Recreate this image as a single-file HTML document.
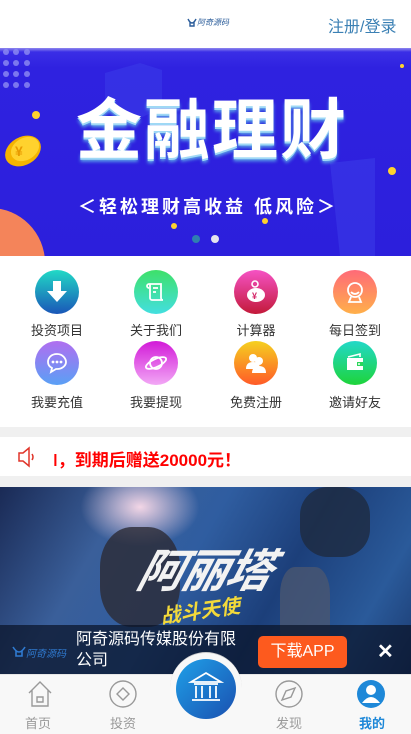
<!DOCTYPE html>
<html><head><meta charset="utf-8"><style>
*{margin:0;padding:0;box-sizing:border-box}
body{width:411px;height:734px;overflow:hidden;background:#fff;font-family:"Liberation Sans","Noto Sans CJK SC",sans-serif;position:relative}
.abs{position:absolute}
.hdr{left:0;top:0;width:411px;height:48px;background:#fff}
.banner{left:0;top:48px;width:411px;height:208px;background:linear-gradient(180deg,#8f87ee 0,#3a2ee6 4px,#2f22e0 20px,#2c1fdc 100%);overflow:hidden}
.ic{width:44px;height:44px;border-radius:50%}
.lbl{font-size:13px;color:#333;width:100px;text-align:center}
</style></head><body>
<div class="abs hdr">
 <svg class="abs" style="left:187px;top:18px" width="10" height="9"><path d="M1 1q2 4 4 4t4-4M3 4v4h4V4" fill="none" stroke="#2a5c9a" stroke-width="1.4"/></svg>
 <div class="abs" style="left:197px;top:17px;font-size:8px;color:#2a5c9a;font-style:italic">阿奇源码</div>
 <div class="abs" style="left:328px;top:13px;font-size:16px;color:#3b80b4">注册/登录</div>
</div>
<div class="abs banner">
 <svg class="abs" style="left:0;top:0" width="411" height="208">
  <g fill="#8e8cf3" opacity=".8">
   <circle cx="6" cy="4" r="3"/><circle cx="16" cy="4" r="3"/><circle cx="27" cy="4" r="3"/>
   <circle cx="6" cy="15" r="3"/><circle cx="16" cy="15" r="3"/><circle cx="27" cy="15" r="3"/>
   <circle cx="6" cy="26" r="3"/><circle cx="16" cy="26" r="3"/><circle cx="27" cy="26" r="3"/>
   <circle cx="6" cy="37" r="3"/><circle cx="16" cy="37" r="3"/><circle cx="27" cy="37" r="3"/>
  </g>
  <polygon points="105,25 140,15 162,22 162,60 140,70 105,60" fill="#3b3ae8" opacity=".6"/>
  <polygon points="330,115 375,110 375,208 340,208" fill="#3a3ae8" opacity=".6"/>
  <circle cx="-10" cy="215" r="55" fill="#f4845a"/>
  <ellipse cx="23" cy="103" rx="19" ry="14" fill="#f5b400" transform="rotate(-30 23 103)"/>
  <ellipse cx="25" cy="101" rx="15" ry="11" fill="#ffd22e" transform="rotate(-30 25 101)"/>
  <text x="15" y="108" font-size="14" fill="#e89a00" font-weight="bold">¥</text>
  <circle cx="36" cy="67" r="4" fill="#ffd22e"/><circle cx="392" cy="123" r="4" fill="#ffd22e"/>
  <circle cx="174" cy="178" r="3" fill="#ffd22e"/><circle cx="265" cy="173" r="3" fill="#ffd22e"/>
  <circle cx="402" cy="18" r="2" fill="#ffd22e"/>
  <circle cx="196" cy="191" r="4" fill="#2f7fb0"/><circle cx="215" cy="191" r="4" fill="#e5e5ee"/>
 </svg>
 <div class="abs" style="left:76px;top:42px;font-size:66px;font-weight:bold;color:#fff;letter-spacing:2px;text-shadow:0 2px 0 #9fd8f5,0 4px 3px #5aa0e8;line-height:80px">金融理财</div>
 <div class="abs" style="left:78px;top:145px;font-size:18px;font-weight:bold;color:#fff;letter-spacing:3px;white-space:nowrap">＜轻松理财高收益 低风险＞</div>
</div>

<div class="abs ic" style="left:35px;top:270px;background:linear-gradient(#21d9c6,#1a56b8)"></div>
<svg class="abs" style="left:45px;top:279px" width="24" height="26"><path d="M8 2h8v10h6L12 23 2 12h6z" fill="#fff"/></svg>
<div class="abs ic" style="left:134px;top:270px;background:linear-gradient(#3ee06a,#43dfe0)"></div>
<svg class="abs" style="left:144px;top:280px" width="24" height="24" fill="none" stroke="#fff" stroke-width="1.8"><path d="M5 4h12v14a2 2 0 0 0 2 2H8a2 2 0 0 1-2-2V4M5 4a2 2 0 0 0 0 4M9 8h5M9 12h3"/></svg>
<div class="abs ic" style="left:234px;top:270px;background:linear-gradient(#f552c4,#c31a3a)"></div>
<svg class="abs" style="left:242px;top:278px" width="28" height="28"><circle cx="13" cy="6" r="3" fill="none" stroke="#fff" stroke-width="1.6"/><ellipse cx="14" cy="17" rx="9" ry="7" fill="#fff"/><text x="10" y="21" font-size="9" fill="#d42a6a" font-weight="bold">¥</text></svg>
<div class="abs ic" style="left:333px;top:270px;background:linear-gradient(#ff6a78,#ffb04a)"></div>
<svg class="abs" style="left:343px;top:280px" width="24" height="26" fill="none" stroke="#fff" stroke-width="1.8"><circle cx="12" cy="10" r="7"/><path d="M8 12q4 4 8 0M8 17l-2 5h12l-2-5"/></svg>

<div class="abs lbl" style="left:7px;top:320px">投资项目</div>
<div class="abs lbl" style="left:106px;top:320px">关于我们</div>
<div class="abs lbl" style="left:206px;top:320px">计算器</div>
<div class="abs lbl" style="left:305px;top:320px">每日签到</div>

<div class="abs ic" style="left:35px;top:341px;background:linear-gradient(#b06ef0,#5aa0f5)"></div>
<svg class="abs" style="left:45px;top:351px" width="24" height="24"><path d="M12 3C6 3 3 7 3 11c0 3 2 5 4 6l-1 4 5-3h1c6 0 9-4 9-7s-3-8-9-8z" fill="none" stroke="#fff" stroke-width="1.8"/><circle cx="8" cy="11" r="1.4" fill="#fff"/><circle cx="12" cy="11" r="1.4" fill="#fff"/><circle cx="16" cy="11" r="1.4" fill="#fff"/></svg>
<div class="abs ic" style="left:134px;top:341px;background:linear-gradient(#d21ad8,#f2a8f5)"></div>
<svg class="abs" style="left:143px;top:350px" width="26" height="26" fill="none" stroke="#fff" stroke-width="1.8"><circle cx="13" cy="13" r="6"/><ellipse cx="13" cy="13" rx="11" ry="4" transform="rotate(-25 13 13)"/></svg>
<div class="abs ic" style="left:234px;top:341px;background:linear-gradient(#f5d020,#ff5a28)"></div>
<svg class="abs" style="left:243px;top:350px" width="26" height="26" fill="#fff"><circle cx="10" cy="8" r="4"/><path d="M3 19q0-7 7-7t7 7z"/><circle cx="16" cy="11" r="4"/><path d="M9 23q0-7 7-7t7 7z"/></svg>
<div class="abs ic" style="left:333px;top:341px;background:linear-gradient(#22d8c8,#1ed43a)"></div>
<svg class="abs" style="left:343px;top:351px" width="24" height="24"><path d="M4 7h16v12H4z" fill="#fff"/><path d="M5 6l12-3v3" fill="none" stroke="#fff" stroke-width="1.6"/><rect x="14" y="11" width="6" height="4" fill="#2bd65a"/><circle cx="16" cy="13" r="1" fill="#fff"/></svg>

<div class="abs lbl" style="left:7px;top:392px">我要充值</div>
<div class="abs lbl" style="left:106px;top:392px">我要提现</div>
<div class="abs lbl" style="left:206px;top:392px">免费注册</div>
<div class="abs lbl" style="left:305px;top:392px">邀请好友</div>

<div class="abs" style="left:0;top:427px;width:411px;height:10px;background:#f0f0f0"></div>
<svg class="abs" style="left:17px;top:446px" width="20" height="22" fill="none" stroke="#e0352a" stroke-width="1.5"><path d="M2 7h4l6-5v18l-6-5H2z M15 8q2 3 0 6"/></svg>
<div class="abs" style="left:53px;top:446px;font-size:17px;font-weight:bold;color:#f00;white-space:nowrap">ǀ，到期后赠送20000元！</div>
<div class="abs" style="left:0;top:476px;width:411px;height:11px;background:#f0f0f0"></div>

<div class="abs" style="left:0;top:487px;width:411px;height:187px;overflow:hidden;background:linear-gradient(120deg,#1a2a55 0%,#3a5f9a 25%,#2f5da0 45%,#1c3f7a 65%,#2a5a9a 85%,#1b3a70 100%)">
 <div class="abs" style="left:80px;top:-20px;width:120px;height:80px;border-radius:50%;background:radial-gradient(#f3d6e6,rgba(200,150,200,0) 70%)"></div>
 <div class="abs" style="left:100px;top:40px;width:80px;height:100px;background:#2c2a35;border-radius:40%;opacity:.8"></div>
 <div class="abs" style="left:300px;top:0;width:70px;height:70px;background:#1e2a40;border-radius:40%;opacity:.8"></div>
 <div class="abs" style="left:280px;top:80px;width:50px;height:90px;background:#4a5670;border-radius:30%;opacity:.8"></div>
 <div class="abs" style="left:140px;top:48px;font-size:46px;font-style:italic;color:#f2f2f2;font-weight:bold;transform:skewX(-15deg);letter-spacing:-2px">阿丽塔</div>
 <div class="abs" style="left:160px;top:108px;font-size:20px;font-style:italic;color:#f3d93a;font-weight:bold;transform:rotate(-8deg)">战斗天使</div>
 <div class="abs" style="left:0;top:138px;width:411px;height:49px;background:rgba(10,20,40,.72)"></div>
 <svg class="abs" style="left:12px;top:159px" width="14" height="12"><path d="M1 1q3 5 6 5t6-5M4 5v5h6V5" fill="none" stroke="#2f7ad0" stroke-width="1.6"/></svg>
 <div class="abs" style="left:26px;top:158px;font-size:10px;color:#2f7ad0;font-style:italic">阿奇源码</div>
 <div class="abs" style="left:76px;top:142px;font-size:16px;color:#fff;line-height:21px;width:170px">阿奇源码传媒股份有限公司</div>
 <div class="abs" style="left:258px;top:149px;width:89px;height:32px;border-radius:5px;background:#fd5a1e;color:#fff;font-size:16px;text-align:center;line-height:32px">下载APP</div>
 <div class="abs" style="left:377px;top:152px;font-size:20px;color:#fff;font-weight:bold">✕</div>
</div>

<div class="abs" style="left:0;top:674px;width:411px;height:60px;background:#f8f8f8;border-top:1px solid #e6e6e6"></div>
<div class="abs" style="left:170px;top:652px;width:72px;height:72px;border-radius:50%;background:#f8f8f8;border-top:1px solid #ccc"></div>
<div class="abs" style="left:176px;top:659px;width:60px;height:60px;border-radius:50%;background:linear-gradient(135deg,#1fa0e8,#1a50b0)"></div>
<svg class="abs" style="left:188px;top:670px" width="36" height="36" fill="none" stroke="#fff" stroke-width="1.8"><path d="M3 12L18 3l15 9zM6 14h24M8 16v12M14 16v12M22 16v12M28 16v12M4 30h28"/></svg>
<svg class="abs" style="left:26px;top:680px" width="28" height="28" fill="none" stroke="#999" stroke-width="1.4"><path d="M3 13L14 2l11 11M6 10v16h16V10M11 17h6v5h-6z"/></svg>
<div class="abs" style="left:25px;top:713px;font-size:13px;color:#999">首页</div>
<svg class="abs" style="left:108px;top:680px" width="30" height="30" fill="none" stroke="#999" stroke-width="1.4"><circle cx="15" cy="14" r="13"/><path d="M15 8l6 6-6 6-6-6z"/></svg>
<div class="abs" style="left:110px;top:713px;font-size:13px;color:#999">投资</div>
<svg class="abs" style="left:274px;top:680px" width="30" height="30" fill="none" stroke="#999" stroke-width="1.4"><circle cx="15" cy="14" r="13"/><path d="M21 8l-9 3-4 9 9-3z"/></svg>
<div class="abs" style="left:276px;top:713px;font-size:13px;color:#999">发现</div>
<svg class="abs" style="left:357px;top:680px" width="28" height="28"><circle cx="14" cy="14" r="14" fill="#1e88d8"/><circle cx="14" cy="10" r="5" fill="#fff"/><path d="M5 23q9-12 18 0" fill="#fff"/></svg>
<div class="abs" style="left:359px;top:713px;font-size:13px;color:#1e88d8;font-weight:bold">我的</div>
</body></html>
